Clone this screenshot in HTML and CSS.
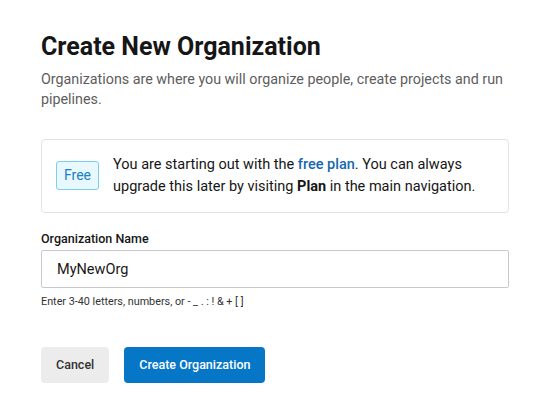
FILE: index.html
```html
<!DOCTYPE html>
<html>
<head>
<meta charset="utf-8">
<link rel="stylesheet" href="styles.css">
</head>
<body>
<main class="page">
  <h1 class="title">Create New Organization</h1>
  <p class="subtitle">Organizations are where you will organize people, create projects and run pipelines.</p>
  <div class="plan-card">
    <span class="badge">Free</span>
    <p class="plan-text">You are starting out with the <a class="link" href="#">free plan</a>. You can always upgrade this later by visiting <strong>Plan</strong> in the main navigation.</p>
  </div>
  <label class="field-label" for="org">Organization Name</label>
  <input class="field-input" id="org" type="text" value="MyNewOrg">
  <p class="field-help">Enter 3-40 letters, numbers, or - _ . : ! &amp; + [ ]</p>
  <div class="actions">
    <button class="btn btn-secondary">Cancel</button>
    <button class="btn btn-primary">Create Organization</button>
  </div>
</main>
</body>
</html>
```
FILE: styles.css
```css
* { box-sizing: border-box; }
html, body { margin: 0; padding: 0; background: #ffffff; }
body { font-family: Roboto, "Noto Sans", Arial, sans-serif; color: #161616; }
.page {
  width: 468px;
  margin-left: 41px;
  padding-top: 32.5px;
  display: flex;
  flex-direction: column;
}
.title {
  margin: 0;
  font-size: 25px;
  line-height: 28px;
  font-weight: 700;
  color: #161616;
}
.subtitle {
  margin: 8px 0 0;
  font-size: 14.3px;
  line-height: 20px;
  color: #5d5d5d;
}
.plan-card {
  margin-top: 30.5px;
  border: 1px solid #e3e3e3;
  border-radius: 4px;
  padding: 13.5px 14px 14.5px;
  display: flex;
  align-items: center;
  gap: 14px;
}
.badge {
  flex: none;
  font-size: 14px;
  line-height: 19px;
  padding: 4px 7px;
  color: #1b7ec6;
  background: #e8f8ff;
  border: 1px solid #7ccdf4;
  border-radius: 3px;
}
.plan-text {
  margin: 0;
  font-size: 14.5px;
  line-height: 22px;
  color: #161616;
}
.link { color: #1569b0; text-decoration: none; font-weight: 500; }
.plan-text strong { font-weight: 700; }
.field-label {
  margin-top: 17px;
  font-size: 12.5px;
  line-height: 18px;
  font-weight: 500;
  color: #161616;
}
.field-input {
  margin-top: 2px;
  height: 38px;
  width: 100%;
  border: 1px solid #c9c9c9;
  border-radius: 2px;
  padding: 0 15px;
  font-family: Roboto, "Noto Sans", Arial, sans-serif;
  font-size: 14.5px;
  color: #161616;
  outline: none;
}
.field-help {
  margin: 7.3px 0 0;
  font-size: 10.8px;
  line-height: 14px;
  color: #333333;
}
.actions {
  margin-top: 37.7px;
  display: flex;
  gap: 15px;
}
.btn {
  height: 36px;
  padding: 0 15px;
  border: none;
  border-radius: 4px;
  font-family: Roboto, "Noto Sans", Arial, sans-serif;
  font-size: 12.5px;
  font-weight: 500;
}
.btn-secondary { background: #ececec; color: #333333; }
.btn-primary { background: #0677c7; color: #ffffff; }
```
